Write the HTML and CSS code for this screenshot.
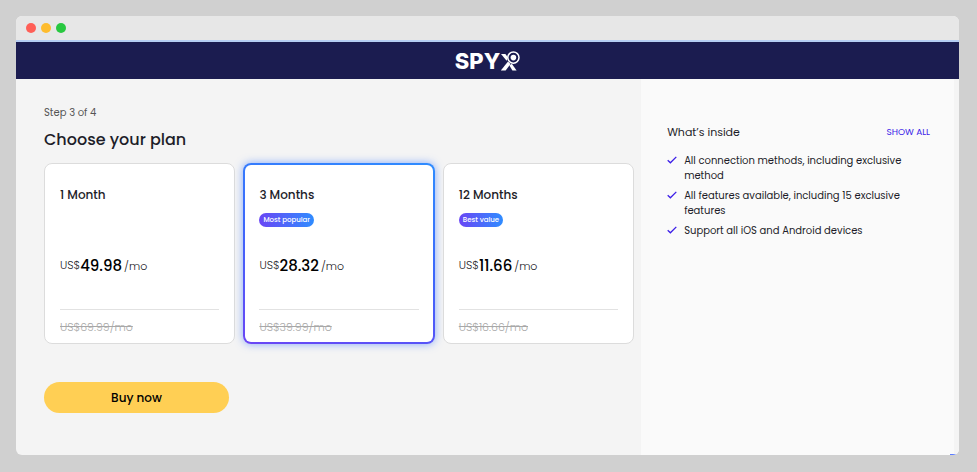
FILE: index.html
```html
<!DOCTYPE html>
<html lang="en">
<head>
  <meta charset="UTF-8">
  <meta name="viewport" content="width=device-width, initial-scale=1.0">
  <title>SPYX - Choose your plan</title>
  <link rel="stylesheet" href="styles.css">
</head>
<body>
  <div class="window">
    <div class="titlebar">
      <span class="dot red"></span>
      <span class="dot yellow"></span>
      <span class="dot green"></span>
    </div>

    <header class="header">
      <a href="#" class="logo">
        <span>SPY</span>
        <svg class="logo-x" viewBox="0 0 20 20" aria-hidden="true">
          <path d="M1 3 H5.4 L8 6.6 L6.6 9.8 Z" fill="#fff" />
          <path d="M0.8 19.4 L8 10.6 L10.6 13 L5.6 19.4 Z" fill="#fff" />
          <path d="M9.4 14.6 L11.8 12.8 L16.6 19.4 H12.4 Z" fill="#fff" />
          <circle cx="13.4" cy="6.6" r="5.6" fill="none" stroke="#fff" stroke-width="1.5" />
          <circle cx="13.4" cy="6.6" r="2.8" fill="#fff" />
        </svg>
      </a>
    </header>

    <div class="content">
      <main class="main">
        <p class="step">Step 3 of 4</p>
        <h1>Choose your plan</h1>

        <div class="plans">
          <section class="plan">
            <h2>1 Month</h2>
            <div class="tag"></div>
            <p class="price"><span class="currency">US$</span><strong>49.98</strong><span>/mo</span></p>
            <p class="old-price"><s>US$69.99/mo</s></p>
          </section>
          <section class="plan selected">
            <h2>3 Months</h2>
            <div class="tag"><span class="badge">Most popular</span></div>
            <p class="price"><span class="currency">US$</span><strong>28.32</strong><span>/mo</span></p>
            <p class="old-price"><s>US$39.99/mo</s></p>
          </section>
          <section class="plan">
            <h2>12 Months</h2>
            <div class="tag"><span class="badge">Best value</span></div>
            <p class="price"><span class="currency">US$</span><strong>11.66</strong><span>/mo</span></p>
            <p class="old-price"><s>US$16.66/mo</s></p>
          </section>
        </div>

        <button type="button" class="buy">Buy now</button>
      </main>

      <aside class="sidebar">
        <div class="sidebar-head">
          <h2>What’s inside</h2>
          <a href="#">SHOW ALL</a>
        </div>
        <ul class="features">
          <li>
            <svg class="check" viewBox="0 0 10 8" aria-hidden="true"><path d="M0.7 4.2 L3.4 6.8 L9.3 0.9" /></svg>
            <span>All connection methods, including exclusive method</span>
          </li>
          <li>
            <svg class="check" viewBox="0 0 10 8" aria-hidden="true"><path d="M0.7 4.2 L3.4 6.8 L9.3 0.9" /></svg>
            <span>All features available, including 15 exclusive features</span>
          </li>
          <li>
            <svg class="check" viewBox="0 0 10 8" aria-hidden="true"><path d="M0.7 4.2 L3.4 6.8 L9.3 0.9" /></svg>
            <span>Support all iOS and Android devices</span>
          </li>
        </ul>
      </aside>
      <span class="chat-edge"></span>
    </div>
  </div>
</body>
</html>
```

FILE: styles.css
```css
* {
  box-sizing: border-box;
}
body {
  margin: 0;
  min-height: 100vh;
  padding: 16px 18px 17px 16px;
  display: flex;
  background: #d0d0d0;
  color: #1d1d29;
  font-family: Poppins, Inter, "Open Sans", sans-serif;
  font-size: 11px;
  font-weight: 300;
  line-height: 16px;
}
h1, h2, p, ul {
  margin: 0;
  padding: 0;
}
a {
  text-decoration: none;
}
.window {
  flex: 1;
  display: flex;
  flex-direction: column;
  border-radius: 6px;
  overflow: hidden;
  background: #f4f4f4;
}
.titlebar {
  display: flex;
  align-items: center;
  gap: 5px;
  height: 26px;
  padding-left: 10px;
  background: #e7e7e7;
  border-bottom: 2px solid #b5cdf3;
}
.dot {
  width: 10px;
  height: 10px;
  border-radius: 50%;
}
.red {
  background: #ff5f57;
}
.yellow {
  background: #febc2e;
}
.green {
  background: #28c840;
}
.header {
  display: flex;
  justify-content: center;
  align-items: center;
  height: 37px;
  background: #1b1c50;
}
.logo {
  display: flex;
  align-items: center;
  color: #fff;
  font-family: Inter, sans-serif;
  font-size: 22px;
  font-weight: 800;
  line-height: 24px;
}
.logo-x {
  width: 20px;
  height: 20px;
}

.content {
  position: relative;
  flex: 1;
  display: grid;
  grid-template-columns: 59fr 30fr;
}
.main {
  padding: 24px 7px 24px 28px;
}
.step {
  color: #555;
  font-size: 10px;
  font-weight: 400;
  line-height: 20px;
}
h1 {
  margin: 4px 0 10px;
  font-size: 16px;
  font-weight: 500;
  line-height: 26px;
}
.plans {
  display: grid;
  grid-template-columns: repeat(3, 1fr);
  gap: 8px;
}
.plan {
  padding: 22px 15px 8px;
  background: #fff;
  border: 1px solid #dcdcdc;
  border-radius: 8px;
}
.plan.selected {
  padding: 21px 14px 7px;
  border: 2px solid transparent;
  background: linear-gradient(#fff, #fff) padding-box, linear-gradient(15deg, #6a46f5, #3d66fb 50%, #2f8cff) border-box;
  box-shadow: 0 0 8px rgba(60, 120, 255, 0.6);
}
.plan h2 {
  font-size: 12px;
  font-weight: 500;
  line-height: 18px;
}
.tag {
  display: flex;
  height: 14px;
  margin-top: 9px;
}
.badge {
  padding: 0 4px;
  border-radius: 7px;
  background: linear-gradient(90deg, #6a46f5, #2f8cff);
  color: #fff;
  font-size: 7px;
  font-weight: 500;
  line-height: 14px;
}
.price {
  display: flex;
  align-items: center;
  height: 20px;
  margin-top: 29px;
}
.price .currency {
  padding-bottom: 2px;
}
.price strong {
  margin-right: 2px;
  color: #000;
  font-size: 15px;
  font-weight: 500;
}
.old-price {
  margin-top: 33px;
  padding-top: 9px;
  border-top: 1px solid #e2e2e2;
  color: #a8a8a8;
}
.buy {
  width: 185px;
  height: 31px;
  margin-top: 38px;
  border: none;
  border-radius: 16px;
  background: #ffcf54;
  color: #000;
  font-family: inherit;
  font-size: 12px;
  font-weight: 500;
  cursor: pointer;
}

.sidebar {
  padding: 44px 24px 24px 26px;
  background: #fafafa;
  border-right: 5px solid #f4f4f4;
  font-weight: 400;
}
.sidebar-head {
  display: flex;
  justify-content: space-between;
  align-items: center;
  line-height: 18px;
}
.sidebar-head h2 {
  font-size: 11px;
  font-weight: 400;
}
.sidebar-head a {
  color: #3c1ee8;
  font-size: 9px;
}
.features {
  margin-top: 12px;
  font-size: 10px;
  line-height: 15px;
  list-style: none;
}
.features li {
  display: flex;
  gap: 7px;
  margin-bottom: 5px;
}
.check {
  flex: none;
  width: 10px;
  height: 8px;
  margin-top: 3px;
  fill: none;
  stroke: #3c1ee8;
  stroke-width: 1.3;
}
/* top of the chat button peeking in at the bottom corner */
.chat-edge {
  position: absolute;
  right: 3px;
  bottom: 0;
  width: 6px;
  height: 1px;
  background: #5b7cff;
}
```
